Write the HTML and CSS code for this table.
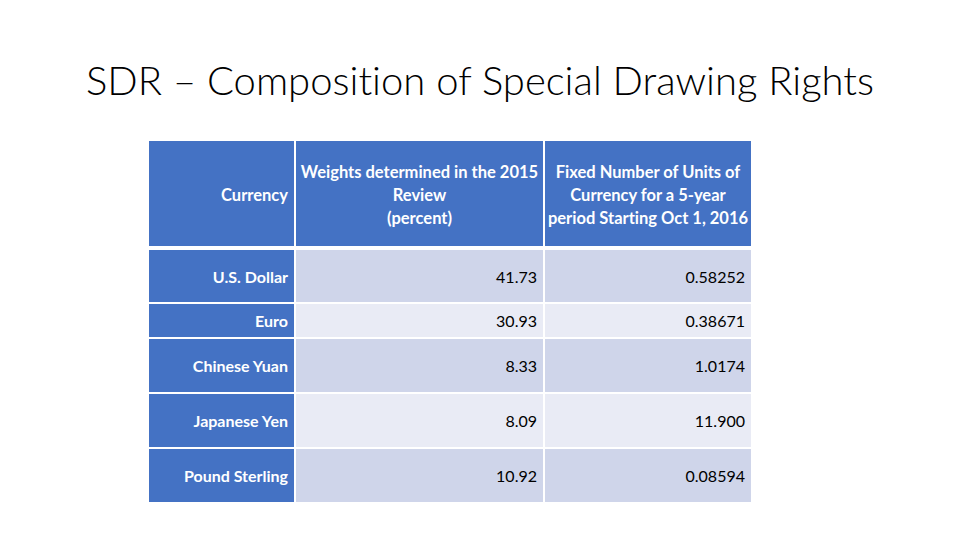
FILE: index.html
```html
<!DOCTYPE html>
<html>
<head>
<meta charset="utf-8">
<link rel="stylesheet" href="styles.css">
</head>
<body>
<div class="slide">
  <h1 class="title">SDR – Composition of Special Drawing Rights</h1>
  <div class="table">
    <div class="cell head first">Currency</div>
    <div class="cell head center">Weights determined in the 2015<br>Review<br>(percent)</div>
    <div class="cell head center">Fixed Number of Units of<br>Currency for a 5-year<br>period Starting Oct 1, 2016</div>

    <div class="cell label">U.S. Dollar</div>
    <div class="cell odd num">41.73</div>
    <div class="cell odd num">0.58252</div>

    <div class="cell label">Euro</div>
    <div class="cell even num">30.93</div>
    <div class="cell even num">0.38671</div>

    <div class="cell label">Chinese Yuan</div>
    <div class="cell odd num">8.33</div>
    <div class="cell odd num">1.0174</div>

    <div class="cell label">Japanese Yen</div>
    <div class="cell even num">8.09</div>
    <div class="cell even num">11.900</div>

    <div class="cell label">Pound Sterling</div>
    <div class="cell odd num">10.92</div>
    <div class="cell odd num">0.08594</div>
  </div>
</div>
</body>
</html>
```
FILE: styles.css
```css
html, body {
  margin: 0;
  padding: 0;
  background: #ffffff;
}
.slide {
  width: 960px;
  height: 540px;
  display: flex;
  flex-direction: column;
  align-items: center;
  overflow: hidden;
  font-variant-ligatures: none;
}
.title {
  margin: 56px 0 0 0;
  height: 48px;
  line-height: 48px;
  font-family: "Lato", "Liberation Sans", sans-serif;
  font-weight: 300;
  font-size: 40px;
  color: #000000;
  white-space: nowrap;
}
.table {
  align-self: flex-start;
  margin-top: 37px;
  margin-left: 149px;
  display: grid;
  grid-template-columns: 145px 247px 206px;
  grid-template-rows: 107px 52px 33px 53px 53px 53px;
  column-gap: 2px;
  row-gap: 2px;
  font-family: "Lato", "Liberation Sans", sans-serif;
  font-size: 16px;
}
.cell {
  display: flex;
  align-items: center;
  padding: 0 6px;
  line-height: 23px;
  white-space: nowrap;
}
.head {
  background: #4472c4;
  color: #ffffff;
  font-weight: 700;
  font-size: 16.5px;
  margin-bottom: 2px;
  padding-top: 3px;
}
.head.first {
  justify-content: flex-end;
}
.center {
  justify-content: center;
  text-align: center;
  padding-left: 0;
  padding-right: 0;
}
.label {
  background: #4472c4;
  color: #ffffff;
  font-weight: 700;
  justify-content: flex-end;
}
.num {
  justify-content: flex-end;
  color: #000000;
}
.odd {
  background: #cfd5ea;
}
.even {
  background: #e9ebf5;
}
```
